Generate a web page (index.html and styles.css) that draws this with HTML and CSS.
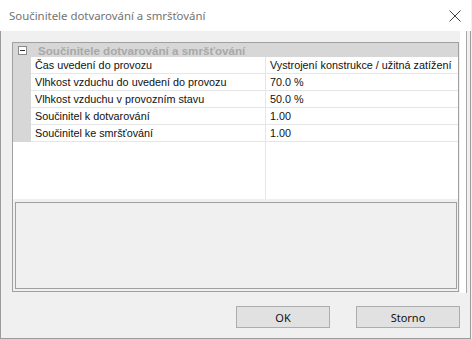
FILE: index.html
```html
<!DOCTYPE html>
<html lang="cs">
<head>
  <title>Součinitele dotvarování a smršťování</title>
  <meta charset="UTF-8">
  <link rel="stylesheet" href="styles.css">
</head>
<body>
  <div class="window">
    <div class="titlebar">
      <span class="title">Součinitele dotvarování a smršťování</span>
      <svg class="close" width="12" height="12" viewBox="0 0 12 12">
        <path d="M0.5 0.5 L11.5 11.5 M11.5 0.5 L0.5 11.5" stroke="#444" stroke-width="1" fill="none"/>
      </svg>
    </div>
    <div class="content">
      <div class="grid">
        <div class="props">
          <div class="category">
            <span class="toggle"></span>
            <span class="cat-name">Součinitele dotvarování a smršťování</span>
          </div>
          <div class="row">
            <div class="margin"></div>
            <div class="label">Čas uvedení do provozu</div>
            <div class="value">Vystrojení konstrukce / užitná zatížení</div>
          </div>
          <div class="row">
            <div class="margin"></div>
            <div class="label">Vlhkost vzduchu do uvedení do provozu</div>
            <div class="value">70.0 %</div>
          </div>
          <div class="row">
            <div class="margin"></div>
            <div class="label">Vlhkost vzduchu v provozním stavu</div>
            <div class="value">50.0 %</div>
          </div>
          <div class="row">
            <div class="margin"></div>
            <div class="label">Součinitel k dotvarování</div>
            <div class="value">1.00</div>
          </div>
          <div class="row">
            <div class="margin"></div>
            <div class="label">Součinitel ke smršťování</div>
            <div class="value">1.00</div>
          </div>
          <div class="filler">
            <div class="filler-left"></div>
            <div></div>
          </div>
        </div>
        <div class="help"></div>
      </div>
      <div class="strip"></div>
    </div>
    <div class="buttons">
      <button class="btn btn-ok">OK</button>
      <button class="btn btn-cancel">Storno</button>
    </div>
  </div>
</body>
</html>
```

FILE: styles.css
```css
/* Zaklad */
body {
  margin: 0;
  background: #f0f0f0;
  font-family: "Liberation Sans", Arial, sans-serif;
}

/* Okno dialogu */
.window {
  width: 471px;
  height: 339px;
  box-sizing: border-box;
  border: 1px solid #9c9c9c;
  border-top: none;
  background: #f0f0f0;
  display: flex;
  flex-direction: column;
}

/* Titulek */
.titlebar {
  height: 31px;
  background: #fff;
  display: flex;
  align-items: center;
  justify-content: space-between;
  padding: 0 8px 0 9px;
  margin: 0 -1px;
}

.title {
  font-family: "Noto Sans", sans-serif;
  font-size: 11.4px;
  color: #737373;
}

.close {
  margin-right: 2px;
}

/* Obsah */
.content {
  display: flex;
  padding: 11px 0 0 11px;
}

.grid {
  width: 447px;
  height: 250px;
  box-sizing: border-box;
  border: 1px solid #a0a0a0;
  display: flex;
  flex-direction: column;
  padding-bottom: 2px;
}

.props {
  height: 156px;
  background: #fff;
  display: flex;
  flex-direction: column;
  font-size: 10.8px;
  color: #111;
}

/* Kategorie */
.category {
  height: 14px;
  background: #d7d7d7;
  display: flex;
  align-items: center;
}

.toggle {
  width: 7px;
  height: 7px;
  border: 1px solid #8a8a8a;
  background: #fff;
  margin: 0 11px 0 5px;
  position: relative;
}

.toggle::after {
  content: "";
  position: absolute;
  left: 1px;
  top: 3px;
  width: 5px;
  height: 1px;
  background: #333;
}

.cat-name {
  font-weight: bold;
  font-size: 11.6px;
  color: #a8a8a8;
}

/* Radky */
.row {
  display: grid;
  grid-template-columns: 18px 234px 1fr;
  height: 17px;
}

.margin {
  background: #d7d7d7;
}

.label, .value {
  border-bottom: 1px solid #e6e6e6;
  padding-left: 4px;
  line-height: 16px;
  white-space: nowrap;
  overflow: hidden;
}

.value {
  border-left: 1px solid #e6e6e6;
  padding-left: 4px;
}

.filler {
  flex: 1;
  display: grid;
  grid-template-columns: 253px 1fr;
}

.filler-left {
  border-right: 1px solid #e6e6e6;
}

/* Napoveda */
.help {
  margin: 3px 1px 0 2px;
  height: 87px;
  box-sizing: border-box;
  border: 1px solid #a0a0a0;
  background: #f0f0f0;
}

.strip {
  width: 6px;
  margin-left: 1px;
  height: 262px;
  background: #fff;
  border-right: 1px solid #a8a8a8;
  margin-top: -11px;
}

/* Tlacitka */
.buttons {
  display: flex;
  justify-content: flex-end;
  gap: 26px;
  padding: 13px 10px 0 0;
}

.btn {
  height: 22px;
  background: #e1e1e1;
  border: 1px solid #adadad;
  font-family: "Noto Sans", sans-serif;
  font-size: 11px;
  color: #111;
  padding: 0;
}

.btn-ok {
  width: 94px;
}

.btn-cancel {
  width: 104px;
}
```
